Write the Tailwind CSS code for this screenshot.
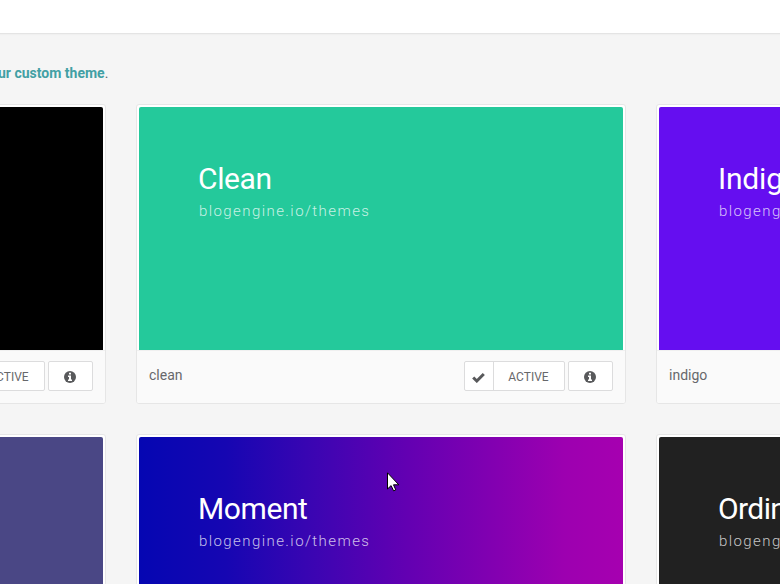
<!DOCTYPE html>
<html lang="en">
<head>
<meta charset="utf-8">
<title>Themes</title>
<script src="https://cdn.jsdelivr.net/npm/@tailwindcss/browser@4"></script>
</head>
<body class="h-[584px] w-[780px] overflow-hidden bg-[#f5f5f5] font-['Roboto',sans-serif] text-[14px] text-[#67686b]">
<svg class="hidden">
  <symbol id="check" viewBox="0 0 13 11"><path d="M1.2 5.5 4.8 9 11.8 2" fill="none" stroke="#58595b" stroke-width="3"/></symbol>
  <symbol id="info" viewBox="0 0 12 12"><circle cx="6" cy="6" r="6" fill="#58595b"/><path d="M5 1.8h2v1.7H5zM4 4.6h3v4h1v1.5H4V8.6h1V6H4z" fill="#fff"/></symbol>
</svg>
<header class="h-[34px] border-b border-[#e4e4e4] bg-white shadow-[0_1px_1px_#f0f0f0]"></header>
<main class="h-[550px] overflow-hidden">
  <p class="flex h-[70px] items-center pt-2 leading-5"><span class="-ml-[2px] whitespace-nowrap"><b class="font-bold text-[#42a0a4]">ur custom theme</b>.</span></p>
  <div class="-ml-[384px] grid w-[1530px] grid-cols-[490px_490px_490px] gap-[30px]" id="themes"></div>
</main>
<svg class="absolute left-[387px] top-[472px] h-[20px] w-[13px]" viewBox="0 0 13 20"><path d="M.5.8V17l3.6-3.4 2.5 5.2 2.2-.9-2.3-5.1h5.3z" fill="#fff" stroke="#000"/></svg>
<script>
const themes = [
  ['Custom', 'bg-black'],
  ['Clean', 'bg-[#24c99b]'],
  ['Indigo', 'bg-[#650ef0]'],
  ['Massive', 'bg-[#4a4785]'],
  ['Moment', 'bg-[linear-gradient(90deg,#0506b2_0%,#1606b2_18%,#3b05b2_36%,#6200b2_55%,#8200b1_73%,#9d00b0_88%,#a600b0_100%)]'],
  ['Ordinary', 'bg-[#212121]'],
];
const spacing = { Clean: 'tracking-[-0.4px]', Moment: 'tracking-[-0.4px]', Ordinary: 'tracking-[-0.6px]' };
document.getElementById('themes').innerHTML = themes.map(([name, bg]) => `
<article class="h-[300px] overflow-hidden rounded-[3px] border border-[#e6e6e6] bg-white">
  <div class="px-[2px] pt-[2px]">
    <div class="h-[243px] rounded-t-[2px] pl-[59px] pt-[54px] ${bg}">
      <h2 class="text-[30px] leading-[36px] text-white ${spacing[name] || 'tracking-[-0.2px]'}">${name}</h2>
      <p class="pt-[4px] pl-[1px] text-[15px] leading-[20px] font-light tracking-[1.42px] text-white/75">blogengine.io/themes</p>
    </div>
  </div>
  <footer class="flex h-[53px] items-start justify-between border-t border-[#f0f0f0] bg-[#fafafa] pl-[12px] pr-[12px] pt-[10px]">
    <span class="pt-[4px] leading-5">${name.toLowerCase()}</span>
    <div class="flex gap-[3px]">
      <div class="flex h-[30px] w-[101px] rounded-[2px] border border-[#dcdcdd] bg-white">
        <span class="flex w-[29px] items-center justify-center border-r border-[#dcdcdd] pt-[2px] pr-[2px]"><svg class="h-[11px] w-[13px] shrink-0"><use href="#check"/></svg></span>
        <span class="flex flex-1 items-center justify-center pt-[1px] pr-[1px] text-[12px]">ACTIVE</span>
      </div>
      <div class="flex h-[30px] w-[45px] items-center justify-center rounded-[2px] border border-[#dcdcdd] bg-white pt-[2px] pr-[1px]"><svg class="h-[12px] w-[12px]"><use href="#info"/></svg></div>
    </div>
  </footer>
</article>`).join('');
</script>
</body>
</html>
